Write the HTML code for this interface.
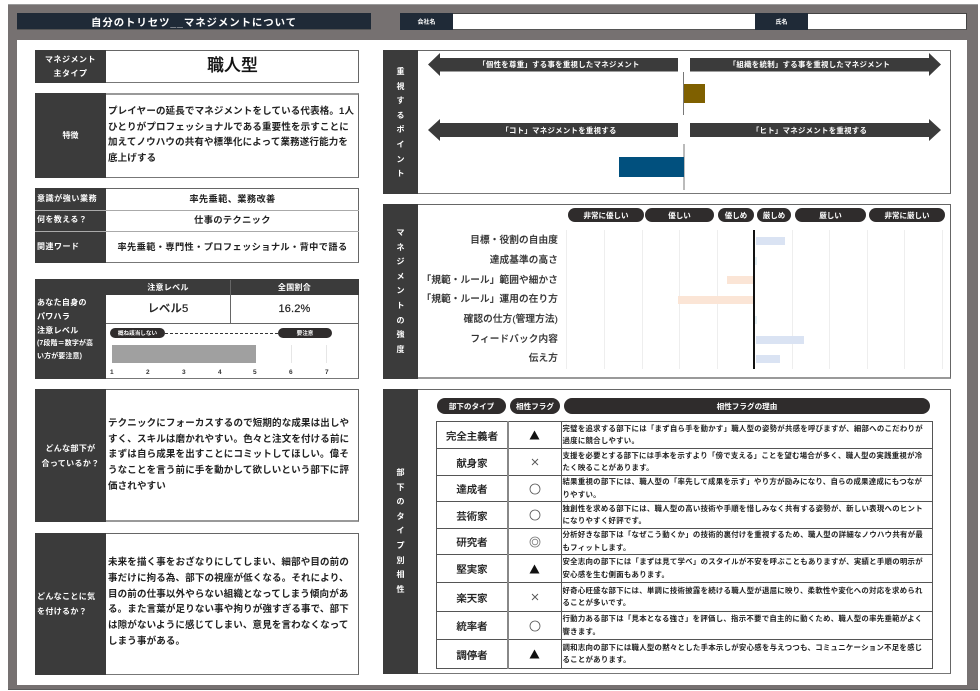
<!DOCTYPE html>
<html lang="ja"><head><meta charset="utf-8"><style>
*{box-sizing:border-box;margin:0;padding:0}
html,body{width:980px;height:691px;overflow:hidden;background:#fff}
body{position:relative;font-family:"Liberation Sans","Noto Sans CJK JP",sans-serif;color:#1a1a1a;filter:blur(.3px)}
.a{position:absolute}
.d{position:absolute;background:#3b3b3b;color:#fff;font-weight:700;display:flex;align-items:center;justify-content:center;text-align:center}
.b{position:absolute;background:#fff;border:1px solid #666;border-bottom:1px solid #777}
.t{position:absolute;white-space:nowrap;font-size:9.5px;font-weight:700;letter-spacing:.15px;color:#222}
.p{position:absolute;background:#2f2c2c;border-radius:9px;color:#fff;font-weight:700;font-size:7.5px;display:flex;align-items:center;justify-content:center;height:14px;top:208px;white-space:nowrap}
.v{position:absolute;width:35px;left:383px;color:#fff;font-weight:700;font-size:8px;text-align:center;line-height:14.6px}
.g{position:absolute;top:230px;height:139px;width:1px;background:#eee}
.l{position:absolute;right:422px;font-size:9.6px;line-height:12px;color:#333;font-weight:500;white-space:nowrap;letter-spacing:.15px;-webkit-text-stroke:.15px #333}
.c{position:absolute;color:#fff;font-weight:700;font-size:7.4px;white-space:nowrap;text-align:center;letter-spacing:.3px}
.n{position:absolute;top:0;font-size:6.5px;color:#333;font-weight:700}
table{position:absolute;left:436px;top:421px;width:497px;height:247px;border-collapse:collapse;table-layout:fixed}
td{border:1px solid #555;text-align:center;padding:0;overflow:hidden;vertical-align:middle}
td svg{display:block;margin:0 auto}
td:nth-child(1){font-size:10.4px;font-weight:500;color:#222;border-right:2px solid #888;-webkit-text-stroke:.15px #222}
td:nth-child(3){text-align:left;font-size:7.4px;line-height:12.5px;font-weight:700;white-space:nowrap;padding-left:1px;letter-spacing:.28px;color:#222}
</style></head><body>
<div class="a" style="left:8px;top:4px;width:970px;height:686px;background:#767171;border-top:1px solid #9a9a9a;border-bottom:1px solid #5c5c5c"></div>
<div class="a" style="left:17px;top:40px;width:950px;height:645px;background:#fff"></div>

<div class="d" style="left:17px;top:13px;width:354px;height:17px;background:#1f2a37;font-size:10.4px;letter-spacing:.95px;border-bottom:1px solid #555">自分のトリセツ__マネジメントについて</div>
<div class="a" style="left:400px;top:13px;width:567px;height:17px;background:#fff;border:1px solid #444;border-bottom:1px solid #555"></div>
<div class="d" style="left:400px;top:13px;width:53px;height:17px;background:#1f2a37;font-size:6px">会社名</div>
<div class="d" style="left:755px;top:13px;width:53px;height:17px;background:#1f2a37;font-size:6px">氏名</div>

<!-- left col -->
<div class="b" style="left:35px;top:50px;width:324px;height:33px"></div>
<div class="d" style="left:35px;top:50px;width:71px;height:33px;font-size:8px;line-height:14px;letter-spacing:.5px">マネジメント<br>主タイプ</div>
<div class="t" style="left:106px;width:253px;top:52px;text-align:center;font-size:16.8px;line-height:28px;font-weight:500;color:#111;-webkit-text-stroke:.2px #111">職人型</div>

<div class="b" style="left:35px;top:93px;width:324px;height:85px;border-top:2px solid #999"></div>
<div class="d" style="left:35px;top:93px;width:71px;height:85px;font-size:8px">特徴</div>
<div class="t" style="left:108px;top:104px;line-height:15.5px">プレイヤーの延長でマネジメントをしている代表格。1人<br>ひとりがプロフェッショナルである重要性を示すことに<br>加えてノウハウの共有や標準化によって業務遂行能力を<br>底上げする</div>

<div class="b" style="left:35px;top:188px;width:324px;height:75px"></div>
<div class="d" style="left:35px;top:188px;width:71px;height:75px"></div>
<div class="a" style="left:35px;top:210px;width:324px;height:1px;background:#aaa"></div>
<div class="a" style="left:35px;top:231px;width:324px;height:1px;background:#aaa"></div>
<div class="c" style="left:37px;top:193px;font-size:8px;letter-spacing:.6px;line-height:12px">意識が強い業務</div>
<div class="c" style="left:37px;top:214px;font-size:8px;letter-spacing:.4px;line-height:12px">何を教える？</div>
<div class="c" style="left:37px;top:241px;font-size:8px;letter-spacing:.5px;line-height:12px">関連ワード</div>
<div class="t" style="left:106px;width:253px;top:193px;text-align:center;font-size:9.2px;line-height:12px;letter-spacing:.4px">率先垂範、業務改善</div>
<div class="t" style="left:106px;width:253px;top:214px;text-align:center;font-size:9.2px;line-height:12px;letter-spacing:.4px">仕事のテクニック</div>
<div class="t" style="left:106px;width:253px;top:241px;text-align:center;font-size:9.2px;line-height:12px;letter-spacing:.4px">率先垂範・専門性・プロフェッショナル・背中で語る</div>

<div class="b" style="left:35px;top:279px;width:324px;height:100px;border-top:2px solid #999"></div>
<div class="d" style="left:35px;top:279px;width:71px;height:100px"></div>
<div class="d" style="left:106px;top:279px;width:253px;height:16px;font-size:8px"></div>
<div class="c" style="left:106px;width:124px;top:283px;font-size:8px;line-height:10px">注意レベル</div>
<div class="c" style="left:230px;width:129px;top:283px;font-size:8px;line-height:10px">全国割合</div>
<div class="a" style="left:230px;top:280px;width:1px;height:43px;background:#666"></div>
<div class="a" style="left:106px;top:323px;width:253px;height:1px;background:#666"></div>
<div class="t" style="left:106px;width:124px;top:302px;text-align:center;font-size:11.3px;line-height:14px;font-weight:500;-webkit-text-stroke:.2px #222">レベル5</div>
<div class="t" style="left:230px;width:129px;top:302px;text-align:center;font-size:11px;line-height:14px;font-weight:500;-webkit-text-stroke:.2px #222">16.2%</div>
<div class="c" style="left:37px;top:296px;font-size:8px;line-height:14px;text-align:left">あなた自身の<br>パワハラ<br>注意レベル</div>
<div class="c" style="left:37px;top:338px;font-size:7px;line-height:12.5px;text-align:left;letter-spacing:.1px">(7段階＝数字が高<br>い方が要注意)</div>
<div class="p" style="left:110px;top:328px;width:55px;height:10px;font-size:5.6px">概ね該当しない</div>
<div class="p" style="left:278px;top:328px;width:54px;height:10px;font-size:5.6px">要注意</div>
<div class="a" style="left:165px;top:333px;width:113px;border-top:1px dashed #333"></div>
<div class="a" style="left:112px;top:345px;width:144px;height:18px;background:#a0a0a0"></div>
<div class="a" style="left:291px;top:345px;width:1px;height:18px;background:#e6e6e6"></div>
<div class="a" style="left:326px;top:345px;width:1px;height:18px;background:#e6e6e6"></div>
<div class="a" style="left:0;top:368px;width:340px;height:9px;line-height:9px">
<span class="n" style="left:110px">1</span><span class="n" style="left:146px">2</span><span class="n" style="left:182px">3</span><span class="n" style="left:218px">4</span><span class="n" style="left:253px">5</span><span class="n" style="left:289px">6</span><span class="n" style="left:325px">7</span></div>

<div class="b" style="left:35px;top:389px;width:324px;height:133px;border-bottom:2px solid #999"></div>
<div class="d" style="left:35px;top:389px;width:71px;height:133px;font-size:8px;line-height:15px;letter-spacing:.35px">どんな部下が<br>合っているか？</div>
<div class="t" style="left:108px;top:416px;line-height:15.7px">テクニックにフォーカスするので短期的な成果は出しや<br>すく、スキルは磨かれやすい。色々と注文を付ける前に<br>まずは自ら成果を出すことにコミットしてほしい。偉そ<br>うなことを言う前に手を動かして欲しいという部下に評<br>価されやすい</div>

<div class="b" style="left:35px;top:533px;width:324px;height:142px"></div>
<div class="d" style="left:35px;top:533px;width:71px;height:142px;font-size:8px;line-height:15px;letter-spacing:.35px;justify-content:flex-start;text-align:left;padding-left:2px">どんなことに気<br>を付けるか？</div>
<div class="t" style="left:108px;top:555px;line-height:15.8px">未来を描く事をおざなりにしてしまい、細部や目の前の<br>事だけに拘る為、部下の視座が低くなる。それにより、<br>目の前の仕事以外やらない組織となってしまう傾向があ<br>る。また言葉が足りない事や拘りが強すぎる事で、部下<br>は隙がないように感じてしまい、意見を言わなくなって<br>しまう事がある。</div>

<!-- panel 1 -->
<div class="b" style="left:383px;top:50px;width:568px;height:144px"></div>
<div class="d" style="left:383px;top:50px;width:35px;height:144px"></div>
<div class="v" style="top:65px">重<br>視<br>す<br>る<br>ポ<br>イ<br>ン<br>ト</div>
<svg class="a" style="left:0;top:0" width="980" height="200">
<polygon fill="#3b3b3b" points="428,64.5 440,53 440,58 678,58 678,71.500 440,71.500 440,76"/>
<polygon fill="#3b3b3b" points="941,64.500 929,53 929,58 690,58 690,71.500 929,71.500 929,76"/>
<polygon fill="#3b3b3b" points="428,130 440,119 440,123 678,123 678,137 440,137 440,141"/>
<polygon fill="#3b3b3b" points="941,130 929,119 929,123 690,123 690,137 929,137 929,141"/>
<rect x="683" y="72" width="1" height="43" fill="#777"/>
<rect x="684" y="84" width="21" height="19" fill="#7f6000"/>
<rect x="683.500" y="144" width="1" height="46" fill="#777"/>
<rect x="619" y="157" width="65" height="20" fill="#01507e"/>
</svg>
<div class="c" style="left:440px;width:238px;top:59px;line-height:11px">「個性を尊重」する事を重視したマネジメント</div>
<div class="c" style="left:690px;width:239px;top:59px;line-height:11px">「組織を統制」する事を重視したマネジメント</div>
<div class="c" style="left:440px;width:238px;top:124.500px;line-height:11px">「コト」マネジメントを重視する</div>
<div class="c" style="left:690px;width:239px;top:124.500px;line-height:11px">「ヒト」マネジメントを重視する</div>

<!-- panel 2 -->
<div class="b" style="left:383px;top:204px;width:568px;height:175px;border-bottom:2px solid #999"></div>
<div class="d" style="left:383px;top:204px;width:35px;height:175px"></div>
<div class="v" style="top:226px">マ<br>ネ<br>ジ<br>メ<br>ン<br>ト<br>の<br>強<br>度</div>
<div class="p" style="left:568px;width:76px">非常に優しい</div>
<div class="p" style="left:645px;width:69px">優しい</div>
<div class="p" style="left:718px;width:36px">優しめ</div>
<div class="p" style="left:757px;width:34px">厳しめ</div>
<div class="p" style="left:795px;width:71px">厳しい</div>
<div class="p" style="left:869px;width:76px">非常に厳しい</div>
<div class="g" style="left:566px"></div><div class="g" style="left:604px"></div><div class="g" style="left:642px"></div><div class="g" style="left:679px"></div><div class="g" style="left:717px"></div><div class="g" style="left:792px"></div><div class="g" style="left:829px"></div><div class="g" style="left:867px"></div><div class="g" style="left:904px"></div><div class="g" style="left:942px"></div>
<div class="a" style="left:756px;top:237px;width:29px;height:8px;background:#dae3f3"></div>
<div class="a" style="left:755px;top:257px;width:2px;height:8px;background:#e4f0f5"></div>
<div class="a" style="left:727px;top:276px;width:26px;height:8px;background:#fbe5d6"></div>
<div class="a" style="left:678px;top:296px;width:75px;height:8px;background:#fbe5d6"></div>
<div class="a" style="left:755px;top:316px;width:2px;height:8px;background:#e4f0f5"></div>
<div class="a" style="left:756px;top:336px;width:48px;height:8px;background:#dae3f3"></div>
<div class="a" style="left:756px;top:355px;width:24px;height:8px;background:#dae3f3"></div>
<div class="a" style="left:753px;top:230px;width:1.500px;height:139px;background:#111"></div>
<div class="l" style="top:235px">目標・役割の自由度</div>
<div class="l" style="top:255px">達成基準の高さ</div>
<div class="l" style="top:275px">「規範・ルール」範囲や細かさ</div>
<div class="l" style="top:294px">「規範・ルール」運用の在り方</div>
<div class="l" style="top:314px">確認の仕方(管理方法)</div>
<div class="l" style="top:334px">フィードバック内容</div>
<div class="l" style="top:353px">伝え方</div>

<!-- panel 3 -->
<div class="b" style="left:383px;top:389px;width:568px;height:285px"></div>
<div class="d" style="left:383px;top:389px;width:35px;height:285px"></div>
<div class="v" style="top:466px">部<br>下<br>の<br>タ<br>イ<br>プ<br>別<br>相<br>性</div>
<div class="p" style="left:437px;top:398px;width:69px;height:16px;font-size:7.6px">部下のタイプ</div>
<div class="p" style="left:510px;top:398px;width:50px;height:16px;font-size:7.6px">相性フラグ</div>
<div class="p" style="left:564px;top:398px;width:366px;height:16px;font-size:7.6px">相性フラグの理由</div>
<svg width="0" height="0" style="position:absolute"><defs>
<symbol id="tri" viewBox="0 0 11 10"><polygon points="5.500,0.500 10.500,9.500 0.500,9.500" fill="#111"/></symbol>
<symbol id="x" viewBox="0 0 10 10"><path d="M2 2L8 8M8 2L2 8" stroke="#555" stroke-width=".9" fill="none"/></symbol>
<symbol id="o" viewBox="0 0 12 12"><circle cx="6" cy="6" r="5" stroke="#555" stroke-width=".8" fill="none"/></symbol>
<symbol id="oo" viewBox="0 0 12 12"><circle cx="6" cy="6" r="5" stroke="#777" stroke-width=".8" fill="none"/><circle cx="6" cy="6" r="2.800" stroke="#777" stroke-width=".8" fill="none"/></symbol>
</defs></svg>
<table><colgroup><col style="width:71.500px"><col style="width:53px"><col></colgroup>
<tr style="height:27px"><td>完全主義者</td><td><svg width="11" height="10"><use href="#tri"/></svg></td><td>完璧を追求する部下には「まず自ら手を動かす」職人型の姿勢が共感を呼びますが、細部へのこだわりが<br>過度に競合しやすい。</td></tr>
<tr style="height:27px"><td>献身家</td><td><svg width="10" height="10"><use href="#x"/></svg></td><td>支援を必要とする部下には手本を示すより「傍で支える」ことを望む場合が多く、職人型の実践重視が冷<br>たく映ることがあります。</td></tr>
<tr style="height:26px"><td>達成者</td><td><svg width="12" height="12"><use href="#o"/></svg></td><td>結果重視の部下には、職人型の「率先して成果を示す」やり方が励みになり、自らの成果達成にもつなが<br>りやすい。</td></tr>
<tr style="height:27px"><td>芸術家</td><td><svg width="12" height="12"><use href="#o"/></svg></td><td>独創性を求める部下には、職人型の高い技術や手順を惜しみなく共有する姿勢が、新しい表現へのヒント<br>になりやすく好評です。</td></tr>
<tr style="height:26px"><td>研究者</td><td><svg width="12" height="12"><use href="#oo"/></svg></td><td>分析好きな部下は「なぜこう動くか」の技術的裏付けを重視するため、職人型の詳細なノウハウ共有が最<br>もフィットします。</td></tr>
<tr style="height:28px"><td>堅実家</td><td><svg width="11" height="10"><use href="#tri"/></svg></td><td>安全志向の部下には「まずは見て学べ」のスタイルが不安を呼ぶこともありますが、実績と手順の明示が<br>安心感を生む側面もあります。</td></tr>
<tr style="height:29px"><td>楽天家</td><td><svg width="10" height="10"><use href="#x"/></svg></td><td>好奇心旺盛な部下には、単調に技術披露を続ける職人型が退屈に映り、柔軟性や変化への対応を求められ<br>ることが多いです。</td></tr>
<tr style="height:28px"><td>統率者</td><td><svg width="12" height="12"><use href="#o"/></svg></td><td>行動力ある部下は「見本となる強さ」を評価し、指示不要で自主的に動くため、職人型の率先垂範がよく<br>響きます。</td></tr>
<tr style="height:29px"><td>調停者</td><td><svg width="11" height="10"><use href="#tri"/></svg></td><td>調和志向の部下には職人型の黙々とした手本示しが安心感を与えつつも、コミュニケーション不足を感じ<br>ることがあります。</td></tr>
</table>
</body></html>
